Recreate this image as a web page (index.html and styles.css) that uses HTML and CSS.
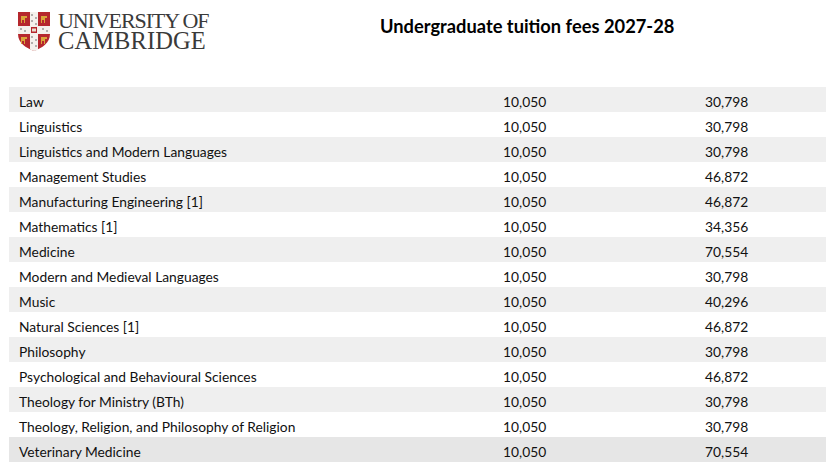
FILE: index.html
```html
<!DOCTYPE html>
<html lang="en">
<head>
<meta charset="utf-8">
<title>Undergraduate tuition fees 2027-28</title>
<link rel="stylesheet" href="styles.css">
</head>
<body>
<header class="header">
  <div class="logo">
    <svg class="shield" viewBox="0 0 32 39" width="32" height="39" aria-hidden="true">
      <path d="M0 0 H32 V22 C32 31 24 36 16 39 C8 36 0 31 0 22 Z" fill="#b5272d"/>
      <path d="M12 0 H20 V14 H32 V22 H20 V38 L16 39 L12 37.6 V22 H0 V14 H12 Z" fill="#f4f1ec"/>
      <g fill="#3a3a3a">
        <circle cx="14" cy="3" r="0.7"/><circle cx="18" cy="6" r="0.7"/><circle cx="14" cy="9" r="0.7"/><circle cx="18" cy="12" r="0.7"/>
        <circle cx="3" cy="17" r="0.7"/><circle cx="7" cy="19" r="0.7"/><circle cx="25" cy="17" r="0.7"/><circle cx="29" cy="19" r="0.7"/>
        <circle cx="14" cy="25" r="0.7"/><circle cx="18" cy="28" r="0.7"/><circle cx="14" cy="31" r="0.7"/><circle cx="18" cy="34" r="0.7"/>
      </g>
      <rect x="13" y="15" width="6" height="6" fill="#b5272d"/>
      <rect x="14" y="16.5" width="4" height="3" fill="#e8e0d0"/>
      <g fill="#d9a53a">
        <path d="M3 4 h6 v2 h-2 v5 h-1 v-3 h-2 v3 h-1 v-5 Z"/>
        <path d="M23 4 h6 v2 h-2 v5 h-1 v-3 h-2 v3 h-1 v-5 Z"/>
        <path d="M3 25 h6 v2 h-2 v5 h-1 v-3 h-2 v3 h-1 v-5 Z"/>
        <path d="M23 25 h6 v2 h-2 v5 h-1 v-3 h-2 v3 h-1 v-5 Z"/>
      </g>
    </svg>
    <div class="wordmark">
      <span class="wm-top">UNIVERSITY OF</span>
      <span class="wm-bottom">CAMBRIDGE</span>
    </div>
  </div>
  <h1 class="title">Undergraduate tuition fees 2027-28</h1>
</header>
<div class="table">
  <div class="row shade"><span>Law</span><span>10,050</span><span>30,798</span></div>
  <div class="row"><span>Linguistics</span><span>10,050</span><span>30,798</span></div>
  <div class="row shade"><span>Linguistics and Modern Languages</span><span>10,050</span><span>30,798</span></div>
  <div class="row"><span>Management Studies</span><span>10,050</span><span>46,872</span></div>
  <div class="row shade"><span>Manufacturing Engineering [1]</span><span>10,050</span><span>46,872</span></div>
  <div class="row"><span>Mathematics [1]</span><span>10,050</span><span>34,356</span></div>
  <div class="row shade"><span>Medicine</span><span>10,050</span><span>70,554</span></div>
  <div class="row"><span>Modern and Medieval Languages</span><span>10,050</span><span>30,798</span></div>
  <div class="row shade"><span>Music</span><span>10,050</span><span>40,296</span></div>
  <div class="row"><span>Natural Sciences [1]</span><span>10,050</span><span>46,872</span></div>
  <div class="row shade"><span>Philosophy</span><span>10,050</span><span>30,798</span></div>
  <div class="row"><span>Psychological and Behavioural Sciences</span><span>10,050</span><span>46,872</span></div>
  <div class="row shade"><span>Theology for Ministry (BTh)</span><span>10,050</span><span>30,798</span></div>
  <div class="row"><span>Theology, Religion, and Philosophy of Religion</span><span>10,050</span><span>30,798</span></div>
  <div class="row shade active"><span>Veterinary Medicine</span><span>10,050</span><span>70,554</span></div>
</div>
</body>
</html>
```
FILE: styles.css
```css
html, body {
  margin: 0;
  padding: 0;
  background: #ffffff;
}
body {
  font-family: "Lato", "Liberation Sans", sans-serif;
  color: #111111;
}
.header {
  height: 87px;
  display: flex;
  align-items: flex-start;
}
.logo {
  display: flex;
  align-items: flex-start;
  padding: 12px 0 0 18px;
  gap: 8px;
  width: 362px;
  box-sizing: border-box;
}
.shield {
  display: block;
}
.wordmark {
  display: flex;
  flex-direction: column;
  font-family: "Liberation Serif", "DejaVu Serif", serif;
  color: #3a3a3a;
  line-height: 1;
  margin-top: -1px;
}
.wm-top {
  font-size: 22px;
  letter-spacing: -1.1px;
  line-height: 20px;
}
.wm-bottom {
  font-size: 24.5px;
  letter-spacing: 0.1px;
  line-height: 19px;
}
.title {
  margin: 15px 0 0 18px;
  font-size: 18.3px;
  font-weight: 700;
  color: #000000;
}
.table {
  margin-left: 9px;
  width: 817px;
}
.row {
  display: grid;
  grid-template-columns: 484px 202px 1fr;
  height: 25px;
  align-items: center;
  font-size: 13.8px;
}
.row span {
  padding-left: 10px;
  padding-top: 3px;
}
.shade {
  background: #efefef;
}
.active {
  background: #e6e6e6;
}
```
